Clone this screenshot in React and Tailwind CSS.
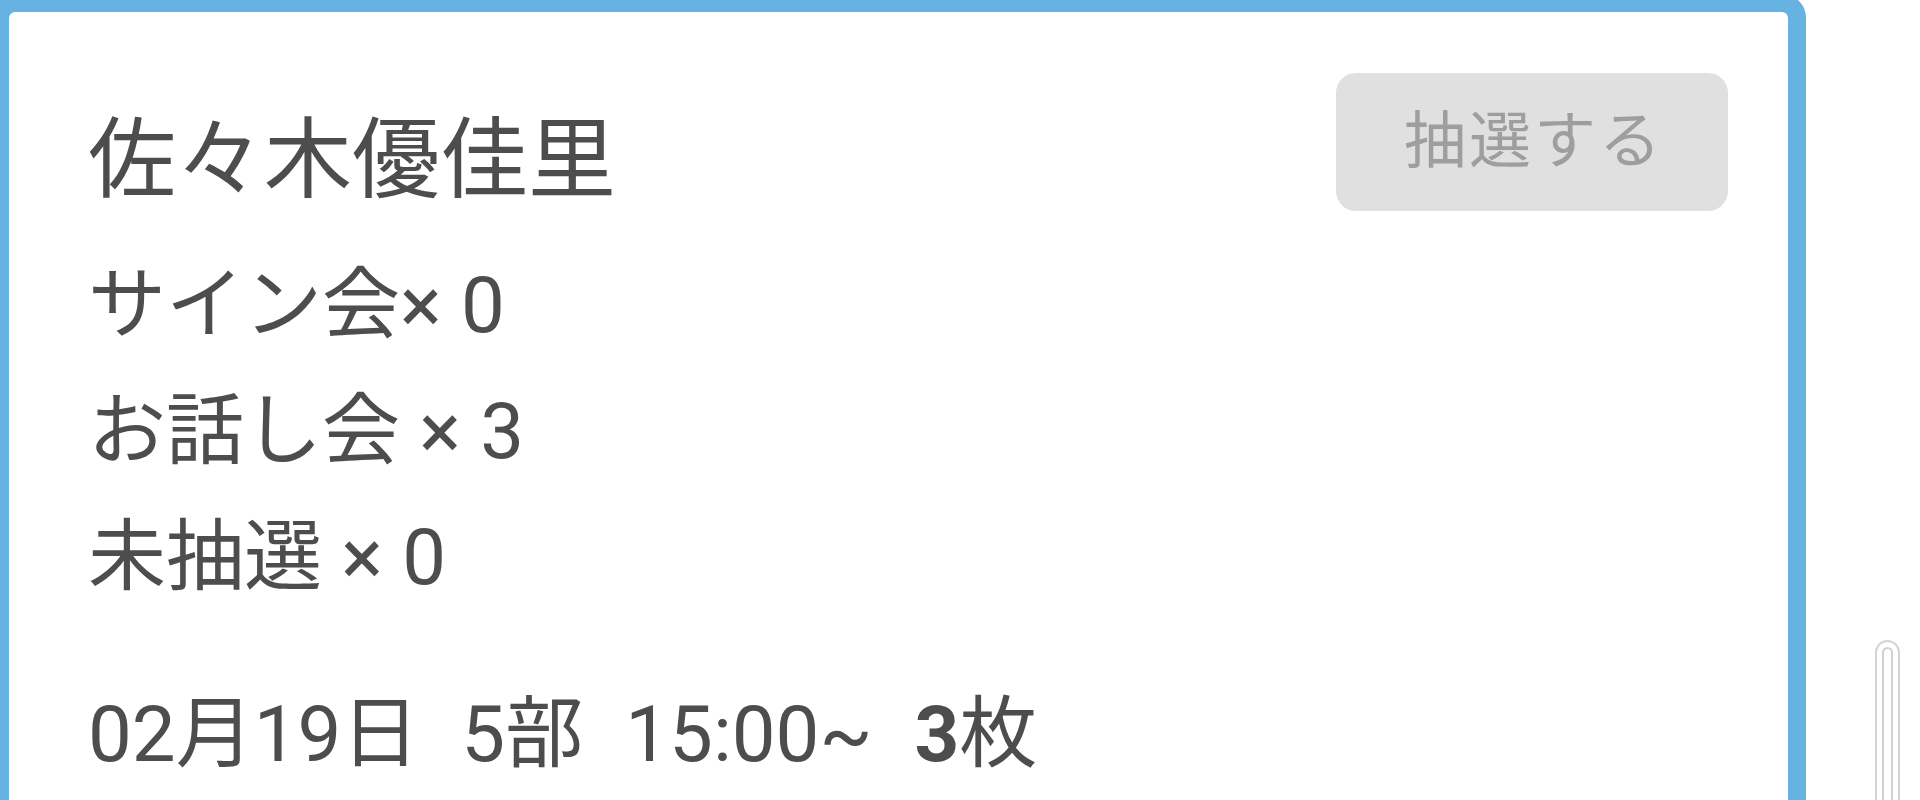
import React from 'react';

const counts = [
    { label: 'サイン会', sep: '×', n: 0 },
    { label: 'お話し会', sep: ' ×', n: 3 },
    { label: '未抽選', sep: ' ×', n: 0 },
];

export default function App() {
    return (
        <div className="relative h-[800px] w-[1920px] overflow-hidden bg-white text-[#4d4d4d] font-['Roboto','Noto_Sans_CJK_JP',sans-serif]">
            <div className="-ml-[9px] -mt-[6px] w-[1815px] h-[900px] rounded-[24px] border-[18px] border-[#66b2e0] bg-white pl-[79px] pr-[60px] pt-[61px]">
                {/* header: name + draw button */}
                <div className="flex items-start justify-between">
                    <div className="mt-[43px] text-[88px] leading-[88px]">佐々木優佳里</div>
                    <button
                        disabled
                        className="h-[138px] w-[392px] rounded-[20px] bg-[#e0e0e0] pl-[4px] text-[62px] leading-[62px] tracking-[3px] text-[#9e9e9e]"
                    >
                        抽選する
                    </button>
                </div>

                <div className="mt-[32px] text-[78px] leading-[126px]">
                    {counts.map((c, i) => (
                        <div key={i}>
                            {c.label}{c.sep} {c.n}
                        </div>
                    ))}
                </div>

                <div className="mt-[51px] flex items-baseline gap-[42px] text-[78px] leading-[126px]">
                    <span>02月19日</span>
                    <span>5部</span>
                    <span>15:00~</span>
                    <span><span className="font-bold">3</span>枚</span>
                </div>
            </div>

            {/* scroll indicator */}
            <div className="absolute left-[1875px] top-[640px] h-[200px] w-[25px] rounded-t-full border-2 border-[#d4d4d4] bg-white pt-[5px]">
                <div className="mx-auto h-full w-[11px] rounded-t-full border-2 border-[#d0d0d0]" />
            </div>
        </div>
    );
}
